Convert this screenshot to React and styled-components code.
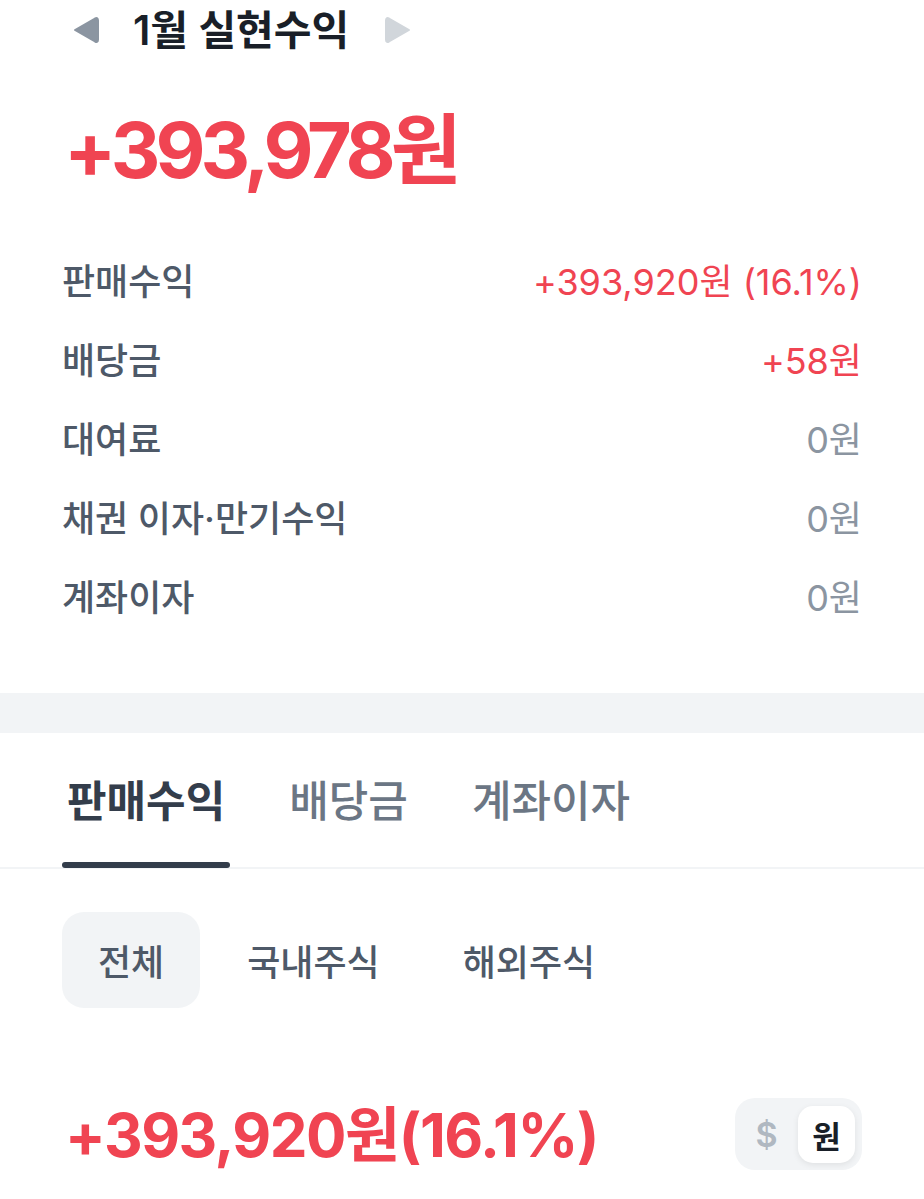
import React, { useState } from "react";
import styled, { createGlobalStyle } from "styled-components";

const GlobalStyle = createGlobalStyle`
  body {
    margin: 0;
    background: #ffffff;
    font-family: Inter, "Noto Sans CJK KR", "Noto Sans", sans-serif;
    -webkit-font-smoothing: antialiased;
  }
`;

const RED = "#f04452";

const Page = styled.div`
  width: 924px;
  background: #fff;
`;

const Section = styled.div`
  padding: 0 62px;
`;

const Header = styled.div`
  height: 60px;
  display: flex;
  align-items: center;
  padding-left: 10px;
`;

const Arrow = styled.button`
  border: 0;
  background: none;
  padding: 0;
  width: 28px;
  height: 30px;
  display: flex;
  align-items: center;
  justify-content: center;
  color: ${(p) => (p.$disabled ? "#d1d6db" : "#8b95a1")};
`;

const Title = styled.h1`
  margin: 0 35px 0 33px;
  font-size: 41px;
  font-weight: 600;
  color: #191f28;
  line-height: 60px;
`;

const Total = styled.div`
  margin-top: 50px;
  height: 80px;
  line-height: 80px;
  font-size: 77px;
  font-weight: 700;
  color: ${RED};
  letter-spacing: -5px;
  padding-left: 2px;
`;

const List = styled.div`
  margin-top: 49px;
`;

const Row = styled.div`
  height: 79px;
  display: flex;
  align-items: center;
  justify-content: space-between;
  font-size: 36px;
`;

const Label = styled.span`
  color: #4e5968;
  font-weight: 500;
`;

const Value = styled.span`
  color: ${(p) => (p.$zero ? "#8b95a1" : RED)};
  font-weight: 400;
`;

const Band = styled.div`
  margin-top: 59px;
  height: 40px;
  background: #f2f4f6;
`;

const TabBar = styled.div`
  display: flex;
  gap: 54px;
  padding: 0 62px;
  border-bottom: 2px solid #f2f4f6;
`;

const Tab = styled.div`
  position: relative;
  height: 134px;
  padding: 0 5px;
  display: flex;
  align-items: center;
  box-sizing: border-box;
  font-size: 43px;
  font-weight: ${(p) => (p.$active ? 700 : 500)};
  color: ${(p) => (p.$active ? "#333d4b" : "#6b7684")};
  &::after {
    content: "";
    display: ${(p) => (p.$active ? "block" : "none")};
    position: absolute;
    left: 0;
    right: 0;
    bottom: -1px;
    height: 6px;
    border-radius: 3px;
    background: #333d4b;
  }
`;

const TabText = styled.span`
  position: relative;
  top: -2px;
`;

const Chips = styled.div`
  display: flex;
  gap: 11px;
  margin-top: 43px;
  padding: 0 62px;
`;

const Chip = styled.div`
  height: 96px;
  padding: 0 36px;
  display: flex;
  align-items: center;
  border-radius: 22px;
  font-size: 36px;
  font-weight: 500;
  color: #4e5968;
  background: ${(p) => (p.$active ? "#f2f4f6" : "transparent")};
`;

const Summary = styled.div`
  margin-top: 90px;
  padding: 0 62px;
  display: flex;
  align-items: center;
  justify-content: space-between;
  height: 72px;
`;

const SummaryAmount = styled.div`
  font-size: 60px;
  font-weight: 700;
  color: ${RED};
  letter-spacing: -1.5px;
  padding-left: 3px;
  margin-top: -8px;
`;

const Toggle = styled.div`
  width: 127px;
  height: 72px;
  border-radius: 20px;
  background: #f2f4f6;
  display: flex;
  align-items: center;
  padding: 0 7px 0 0;
  box-sizing: border-box;
`;

const ToggleItem = styled.div`
  flex: ${(p) => (p.$active ? "0 0 57px" : "1")};
  height: 57px;
  border-radius: 15px;
  display: flex;
  align-items: center;
  justify-content: center;
  font-size: ${(p) => (p.$active ? "31px" : "34px")};
  font-weight: ${(p) => (p.$active ? 700 : 600)};
  color: ${(p) => (p.$active ? "#191f28" : "#b0b8c1")};
  background: ${(p) => (p.$active ? "#ffffff" : "transparent")};
  box-shadow: ${(p) => (p.$active ? "0 2px 6px rgba(0,0,0,0.08)" : "none")};
`;

const rows = [
  { label: "판매수익", value: "+393,920원 (16.1%)" },
  { label: "배당금", value: "+58원" },
  { label: "대여료", value: "0원", zero: true },
  { label: "채권 이자·만기수익", value: "0원", zero: true },
  { label: "계좌이자", value: "0원", zero: true },
];

const Triangle = ({ dir }) => (
  <svg width="28" height="30" viewBox="0 0 28 30">
    {dir === "left" ? (
      <path
        d="M3 15 L23 3.5 Q26 2 26 5.5 L26 24.5 Q26 28 23 26.5 Z"
        fill="currentColor"
        stroke="currentColor"
        strokeWidth="2"
        strokeLinejoin="round"
      />
    ) : (
      <path
        d="M25 15 L5 3.5 Q2 2 2 5.5 L2 24.5 Q2 28 5 26.5 Z"
        fill="currentColor"
        stroke="currentColor"
        strokeWidth="2"
        strokeLinejoin="round"
      />
    )}
  </svg>
);

export default function App() {
  const [tab, setTab] = useState(0);
  const [chip, setChip] = useState(0);
  return (
    <Page>
      <GlobalStyle />
      <Section>
        <Header>
          <Arrow>
            <Triangle dir="left" />
          </Arrow>
          <Title>1월 실현수익</Title>
          <Arrow $disabled>
            <Triangle dir="right" />
          </Arrow>
        </Header>
        <Total>+393,978원</Total>
        <List>
          {rows.map((r) => (
            <Row key={r.label}>
              <Label>{r.label}</Label>
              <Value $zero={r.zero}>{r.value}</Value>
            </Row>
          ))}
        </List>
      </Section>
      <Band />
      <TabBar>
        {["판매수익", "배당금", "계좌이자"].map((t, i) => (
          <Tab key={t} $active={tab === i} onClick={() => setTab(i)}>
            <TabText>{t}</TabText>
          </Tab>
        ))}
      </TabBar>
      <Chips>
        {["전체", "국내주식", "해외주식"].map((c, i) => (
          <Chip key={c} $active={chip === i} onClick={() => setChip(i)}>
            {c}
          </Chip>
        ))}
      </Chips>
      <Summary>
        <SummaryAmount>+393,920원(16.1%)</SummaryAmount>
        <Toggle>
          <ToggleItem>$</ToggleItem>
          <ToggleItem $active>원</ToggleItem>
        </Toggle>
      </Summary>
    </Page>
  );
}
